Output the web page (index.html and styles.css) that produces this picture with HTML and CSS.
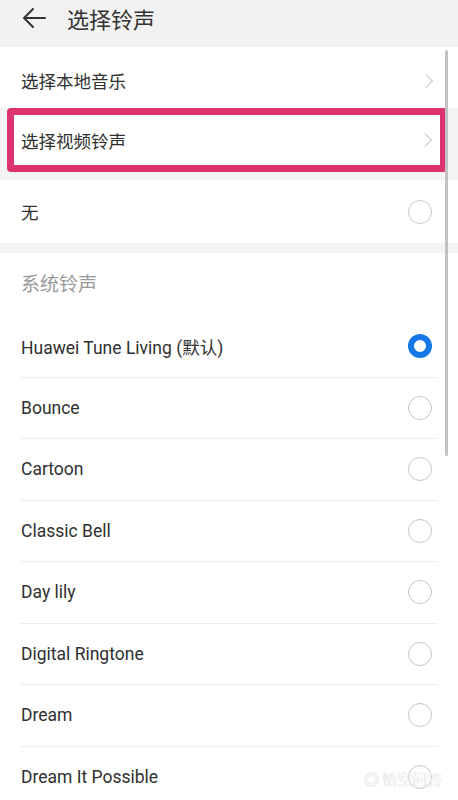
FILE: index.html
```html
<!DOCTYPE html>
<html>
<head>
    <title>选择铃声</title>
    <link rel="stylesheet" href="styles.css">
</head>
<body>
    <div class="header">
        <svg class="back" width="26" height="22" viewBox="0 0 26 22">
            <path d="M24 11H3 M12 2L3 11L12 20" fill="none" stroke="#333" stroke-width="2" stroke-linecap="round" stroke-linejoin="round"/>
        </svg>
        <span class="title">选择铃声</span>
    </div>

    <div class="row link first">
        <span class="label">选择本地音乐</span>
        <span class="chevron"></span>
    </div>
    <div class="row link marked">
        <span class="label">选择视频铃声</span>
        <span class="chevron"></span>
    </div>

    <div class="gap small"></div>
    <div class="row none">
        <span class="label">无</span>
        <span class="radio"></span>
    </div>
    <div class="gap"></div>

    <div class="section">
        <div class="section-title">系统铃声</div>
        <div class="item"><span class="label">Huawei Tune Living (默认)</span><span class="radio on"></span></div>
        <div class="item"><span class="label">Bounce</span><span class="radio"></span></div>
        <div class="item"><span class="label">Cartoon</span><span class="radio"></span></div>
        <div class="item"><span class="label">Classic Bell</span><span class="radio"></span></div>
        <div class="item"><span class="label">Day lily</span><span class="radio"></span></div>
        <div class="item"><span class="label">Digital Ringtone</span><span class="radio"></span></div>
        <div class="item"><span class="label">Dream</span><span class="radio"></span></div>
        <div class="item"><span class="label">Dream It Possible</span><span class="radio"></span></div>
    </div>

    <div class="scrollbar"></div>
    <div class="watermark">◎ 悟空问答</div>
</body>
</html>
```

FILE: styles.css
```css
body {
    margin: 0;
    background: #f4f4f4;
    font-family: Roboto, "Noto Sans CJK SC", sans-serif;
    color: #333;
    overflow: hidden;
    height: 800px;
    position: relative;
}
.header {
    height: 47px;
    display: flex;
    align-items: flex-start;
    padding: 4px 0 0 21px;
    box-sizing: border-box;
    background: #f2f2f2;
}
.back {
    margin-top: 3px;
}
.title {
    font-family: "Noto Sans CJK SC", sans-serif;
    font-size: 22px;
    line-height: 28px;
    margin-left: 20px;
    color: #333;
}
.row {
    display: flex;
    align-items: center;
    background: #fff;
    padding-left: 21px;
    box-sizing: border-box;
}
.label {
    flex: 1;
    font-size: 17.5px;
    color: #303030;
}
.row.first {
    height: 61px;
    padding-top: 6px;
    padding-right: 27px;
}
.row.marked {
    height: 64px;
    margin: 0 11px 0 7px;
    border: 7px solid #db3470;
    border-radius: 4px;
    padding-left: 7px;
    padding-right: 10px;
}
.chevron {
    width: 9px;
    height: 9px;
    border-top: 1.5px solid #c8c8c8;
    border-right: 1.5px solid #c8c8c8;
    transform: rotate(45deg);
}
.gap {
    height: 10px;
}
.gap.small {
    height: 8px;
}
.row.none {
    height: 63px;
    padding-right: 26px;
}
.section {
    background: #fff;
    padding-left: 21px;
}
.section-title {
    height: 63px;
    line-height: 64px;
    font-size: 19px;
    color: #999;
}
.item {
    height: 61.5px;
    display: flex;
    align-items: center;
    margin-right: 20px;
    padding-right: 6px;
    border-bottom: 1px solid #ebebeb;
    box-sizing: border-box;
}
.radio {
    width: 24px;
    height: 24px;
    border: 1.5px solid #c6c6c6;
    border-radius: 50%;
    box-sizing: border-box;
}
.radio.on {
    border: 6.5px solid #1677e6;
}
.scrollbar {
    position: absolute;
    left: 445px;
    top: 50px;
    width: 3px;
    height: 406px;
    background: #c2c2c2;
    border-radius: 2px;
}
.watermark {
    position: absolute;
    left: 364px;
    top: 768px;
    font-family: "Noto Sans CJK SC", sans-serif;
    font-size: 15px;
    color: #fafafa;
    text-shadow: 0 0 1px #bbb;
}
```
